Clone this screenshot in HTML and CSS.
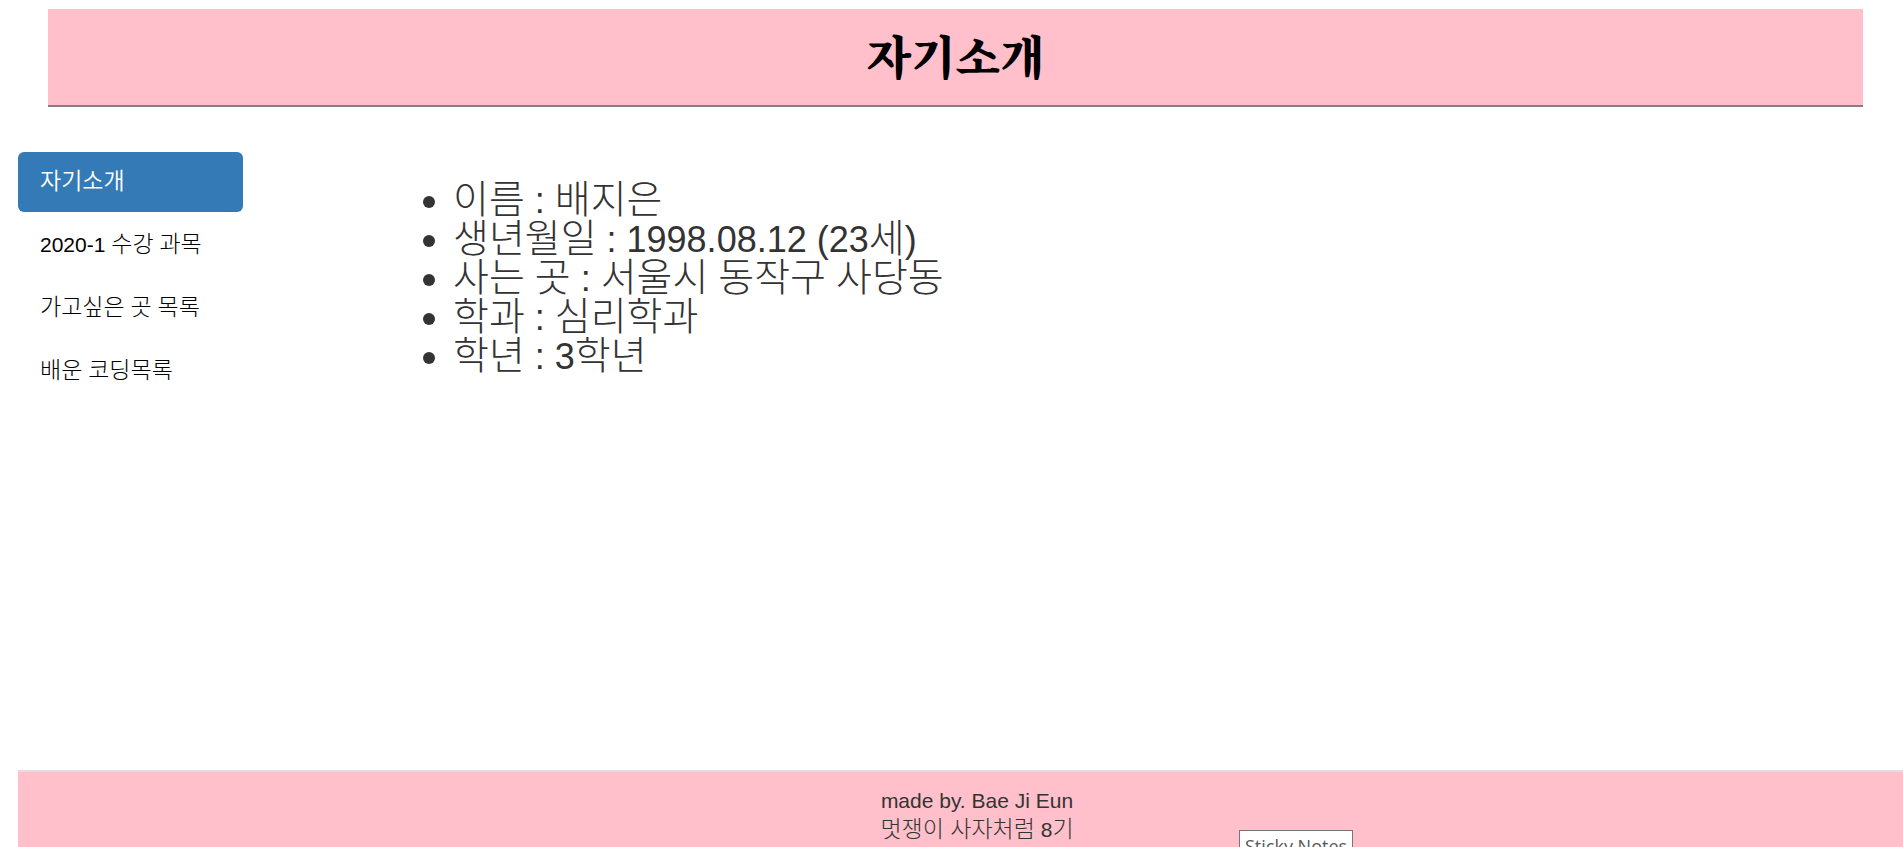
FILE: index.html
```html
<!DOCTYPE html>
<html lang="ko">
<head>
<meta charset="utf-8">
<title>자기소개</title>
<link rel="stylesheet" href="styles.css">
</head>
<body>
<header class="banner"><h1 class="banner-title">자기소개</h1></header>
<main class="content">
  <nav class="menu">
    <a class="menu-link active" href="#">자기소개</a>
    <a class="menu-link" href="#"><span class="latin">2020-1 </span>수강<span class="latin"> </span>과목</a>
    <a class="menu-link" href="#">가고싶은<span class="latin"> </span>곳<span class="latin"> </span>목록</a>
    <a class="menu-link" href="#">배운<span class="latin"> </span>코딩목록</a>
  </nav>
  <ul class="profile">
    <li>이름<span class="latin"> : </span>배지은</li>
    <li>생년월일<span class="latin"> : 1998.08.12 (23</span>세<span class="latin">)</span></li>
    <li>사는<span class="latin"> </span>곳<span class="latin"> : </span>서울시<span class="latin"> </span>동작구<span class="latin"> </span>사당동</li>
    <li>학과<span class="latin"> : </span>심리학과</li>
    <li>학년<span class="latin"> : 3</span>학년</li>
  </ul>
</main>
<footer class="footer">
  <p class="footer-text"><span class="latin">made by. Bae Ji Eun</span><br>멋쟁이 사자처럼<span class="latin"> 8</span>기</p>
  <div class="tooltip" role="tooltip">Sticky Notes</div>
</footer>
</body>
</html>
```
FILE: styles.css
```css
* { box-sizing: border-box; }
body {
  margin: 0;
  min-height: 100vh;
  display: flex;
  flex-direction: column;
  background: #fff;
  color: #333;
  font-family: "Liberation Sans", "Noto Sans CJK KR", sans-serif;
  font-size: 23px;
  font-weight: 300;
  line-height: 29px;
}
.latin {
  font-size: 21px;
  font-weight: 400;
  line-height: 1;
}
.banner {
  margin: 9px 40px 0 48px;
  padding: 15px 0 21px;
  border-bottom: 2px solid #8b7b82;
  background: pink;
  text-align: center;
}
.banner-title {
  margin: 0;
  color: #000;
  font-family: "Noto Serif CJK KR", "Noto Sans CJK KR", serif;
  font-size: 46px;
  font-weight: 900;
  line-height: 60px;
}
.content {
  flex: 1;
  display: flex;
  gap: 170px;
  padding: 45px 18px 0;
}
.menu {
  display: flex;
  flex-direction: column;
  gap: 3px;
  width: 225px;
}
.menu-link {
  height: 60px;
  padding: 15px 22px;
  border-radius: 6px;
  color: #000;
  text-decoration: none;
}
.menu-link.active {
  background: #337ab7;
  color: #fff;
  font-weight: 350;
}
.profile {
  margin: 28px 0 0;
  padding-left: 40px;
  font-size: 39px;
  line-height: 39px;
}
.profile .latin { font-size: 36px; }
.footer {
  position: relative;
  height: 77px;
  padding: 14px 0 0 33px;
  margin-left: 18px;
  border-top: 2px solid #e0dde0;
  background: pink;
  overflow: hidden;
  text-align: center;
}
.footer-text { margin: 0; }
.tooltip {
  position: absolute;
  top: 58px;
  left: 1221px;
  padding: 1px 5px;
  border: 1px solid #767676;
  background: #fff;
  color: #575757;
  font-family: "Open Sans", sans-serif;
  font-size: 18px;
  font-weight: 400;
}
```
